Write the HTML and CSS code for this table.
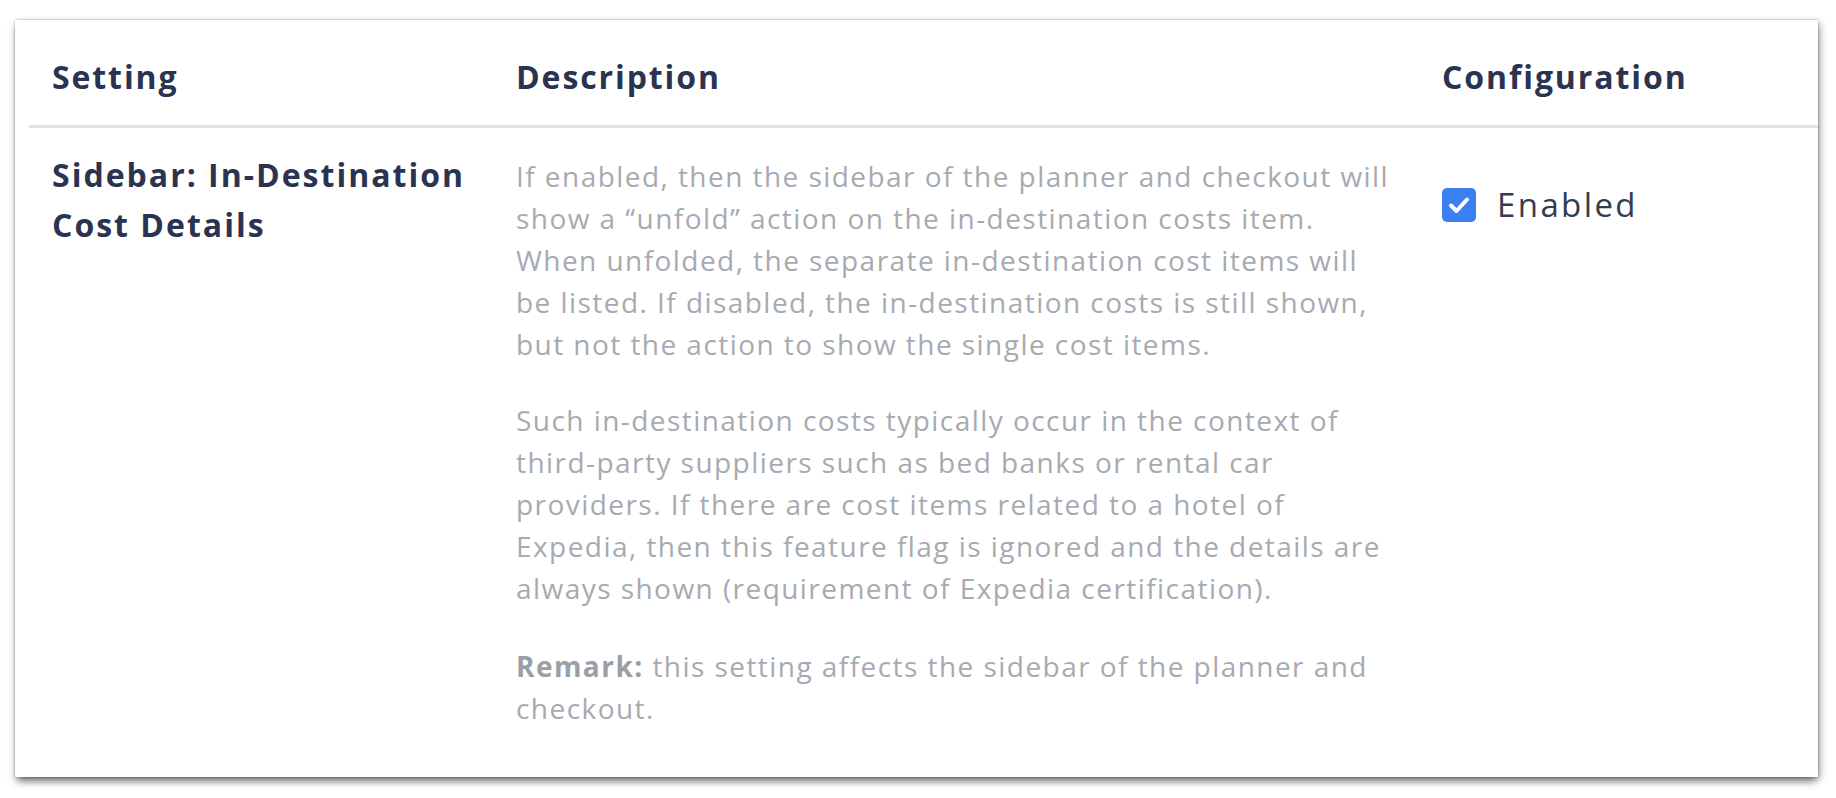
FILE: index.html
```html
<!DOCTYPE html>
<html lang="en">
<head>
<meta charset="utf-8">
<title>Settings</title>
<link rel="stylesheet" href="styles.css">
</head>
<body>
<div class="card">
  <div class="table">
    <div class="thead">
      <div class="th">Setting</div>
      <div class="th">Description</div>
      <div class="th">Configuration</div>
    </div>
    <div class="trow">
      <div class="td name">Sidebar: In-Destination<br>Cost Details</div>
      <div class="td desc">
        <p>If enabled, then the sidebar of the planner and checkout will<br>show a “unfold” action on the in-destination costs item.<br>When unfolded, the separate in-destination cost items will<br>be listed. If disabled, the in-destination costs is still shown,<br>but not the action to show the single cost items.</p>
        <p class="p2">Such in-destination costs typically occur in the context of<br>third-party suppliers such as bed banks or rental car<br>providers. If there are cost items related to a hotel of<br>Expedia, then this feature flag is ignored and the details are<br>always shown (requirement of Expedia certification).</p>
        <p><strong>Remark:</strong> this setting affects the sidebar of the planner and<br>checkout.</p>
      </div>
      <div class="td config">
        <label class="check">
          <span class="box"><svg width="34" height="34" viewBox="0 0 34 34"><path d="M9 17.5 L14.5 23 L25 11.5" fill="none" stroke="#fff" stroke-width="4" stroke-linecap="round" stroke-linejoin="round"/></svg></span>
          <span class="label">Enabled</span>
        </label>
      </div>
    </div>
  </div>
</div>
</body>
</html>
```

FILE: styles.css
```css
html, body {
  margin: 0;
  padding: 0;
  background: #ffffff;
}
body {
  padding: 20px 18px 21px 15px;
  font-family: "Open Sans", "Liberation Sans", sans-serif;
}
.card {
  height: 757px;
  box-sizing: border-box;
  background: #ffffff;
  padding-left: 14px;
  box-shadow: 0 6px 8px -2px rgba(0, 0, 0, 0.5), 3px 2px 7px rgba(0, 0, 0, 0.2), 0 0 2px rgba(0, 0, 0, 0.35);
}
.thead, .trow {
  display: grid;
  grid-template-columns: 464px 926px 1fr;
}
.thead {
  border-bottom: 3px solid #e3e3e3;
}
.th {
  padding: 33px 23px 24px;
  font-size: 32px;
  line-height: 48px;
  font-weight: 700;
  letter-spacing: 1.9px;
  color: #2a3450;
}
.td {
  padding: 0 23px;
}
.name {
  padding-top: 22px;
  font-size: 32px;
  line-height: 50px;
  font-weight: 700;
  letter-spacing: 2px;
  color: #2a3450;
}
.desc {
  padding-top: 27px;
  font-size: 28px;
  line-height: 42px;
  letter-spacing: 1.45px;
  color: #a7aab1;
}
.desc p {
  margin: 0 0 34px;
  white-space: nowrap;
}
.desc p.p2 {
  margin-bottom: 36px;
}
.desc strong {
  font-weight: 700;
  color: #9b9ea6;
}
.config {
  padding-top: 60px;
}
.check {
  display: flex;
  align-items: center;
  gap: 21px;
}
.box {
  width: 34px;
  height: 34px;
  border-radius: 5px;
  background: #3b80f2;
  display: flex;
}
.label {
  font-size: 33px;
  line-height: 34px;
  letter-spacing: 2.4px;
  color: #343d50;
}
```
